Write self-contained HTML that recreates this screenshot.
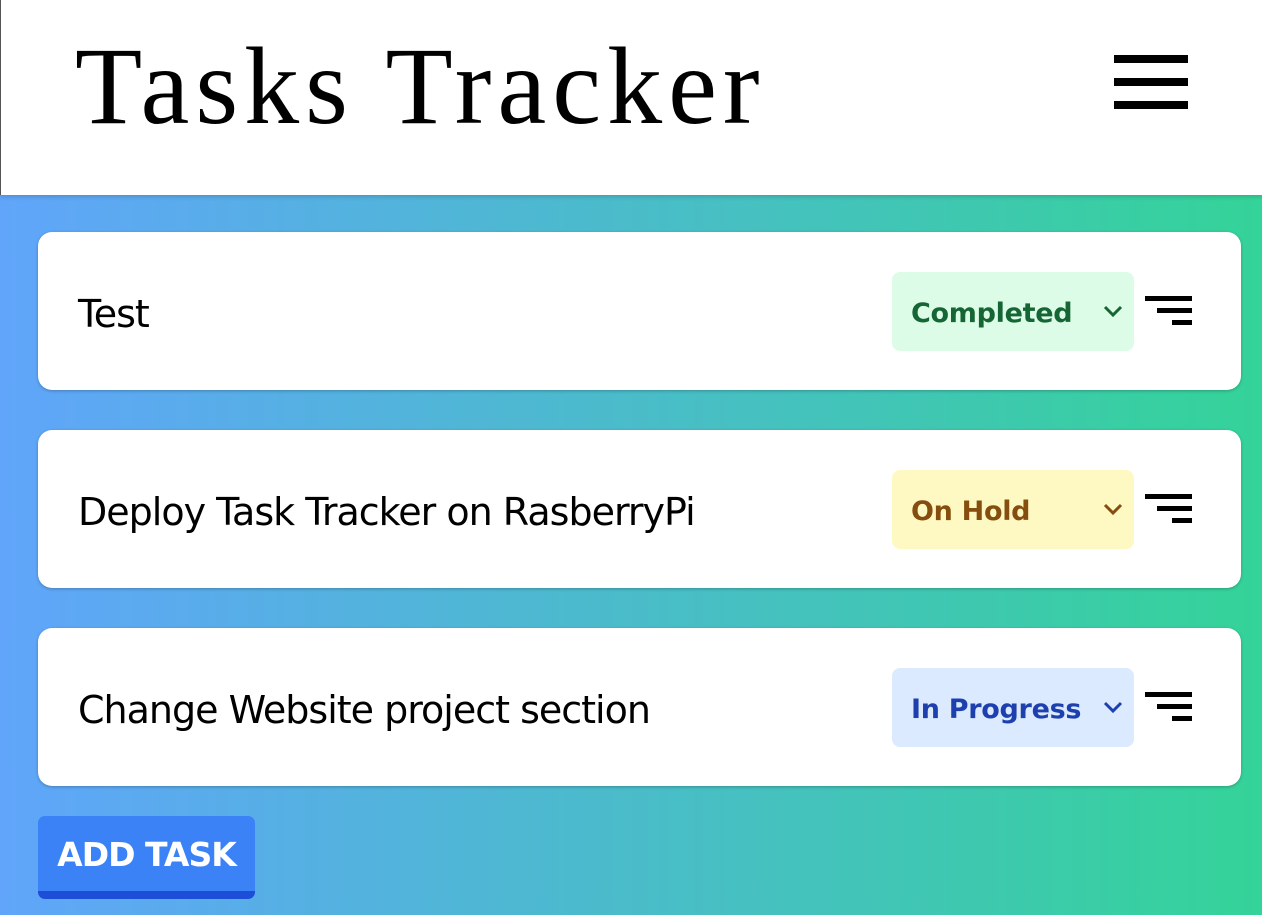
<!DOCTYPE html>
<html><head><style>
body{margin:0;width:1262px;height:915px;overflow:hidden;font-family:"Liberation Sans",sans-serif;background:linear-gradient(90deg,#60a5fa,#34d399);position:relative}
.hd{position:absolute;left:0;top:0;width:1262px;height:195px;background:#fff;border-left:1px solid #555;box-sizing:border-box;box-shadow:0 2px 4px rgba(0,0,0,.15)}
.hd h1{position:absolute;left:74px;top:16px;margin:0;font-family:"Liberation Serif",serif;font-weight:400;font-size:110px;line-height:140px;letter-spacing:6px}
.burger{position:absolute;left:1113px;top:55px;width:74px}
.burger div{height:8px;background:#000;margin-bottom:15px}
.card{position:absolute;left:38px;width:1203px;height:158px;background:#fff;border-radius:14px;box-shadow:0 1px 3px rgba(0,0,0,.25)}
.card .t{position:absolute;left:40px;top:0;line-height:164px;font-size:38px;color:#000;font-family:"DejaVu Sans","Liberation Sans",sans-serif;letter-spacing:-1px}
.sel{position:absolute;left:854px;top:40px;width:242px;height:79px;border-radius:8px;font-size:27px;font-weight:bold;line-height:83px;box-sizing:border-box;padding-left:19px;font-family:"DejaVu Sans",sans-serif;letter-spacing:-.3px}
.sel svg{position:absolute;right:10px;top:32px}
.ic{position:absolute;left:1107px;top:64px;width:47px}
.ic div{height:5px;background:#000;margin-bottom:7px;margin-left:auto}
.btn{position:absolute;left:38px;top:816px;width:217px;height:83px;background:#3b82f6;border-radius:7px;border-bottom:8px solid #1d4ed8;box-sizing:border-box;color:#fff;font-weight:bold;font-size:33px;line-height:78px;text-align:center;font-family:"DejaVu Sans",sans-serif;letter-spacing:-1px}
</style></head><body>
<div class="hd"><h1>Tasks Tracker</h1><div class="burger"><div></div><div></div><div></div></div></div>
<div class="card" style="top:232px"><div class="t">Test</div>
<div class="sel" style="background:#dcfce7;color:#166534">Completed<svg width="22" height="14"><path d="M3 3l8 8 8-8" stroke="#166534" stroke-width="3" fill="none"/></svg></div>
<div class="ic"><div style="width:47px"></div><div style="width:35px"></div><div style="width:20px"></div></div></div>
<div class="card" style="top:430px"><div class="t">Deploy Task Tracker on RasberryPi</div>
<div class="sel" style="background:#fef9c3;color:#854d0e">On Hold<svg width="22" height="14"><path d="M3 3l8 8 8-8" stroke="#854d0e" stroke-width="3" fill="none"/></svg></div>
<div class="ic"><div style="width:47px"></div><div style="width:35px"></div><div style="width:20px"></div></div></div>
<div class="card" style="top:628px"><div class="t">Change Website project section</div>
<div class="sel" style="background:#dbeafe;color:#1e40af">In Progress<svg width="22" height="14"><path d="M3 3l8 8 8-8" stroke="#1e40af" stroke-width="3" fill="none"/></svg></div>
<div class="ic"><div style="width:47px"></div><div style="width:35px"></div><div style="width:20px"></div></div></div>
<div class="btn">ADD TASK</div>
</body></html>
